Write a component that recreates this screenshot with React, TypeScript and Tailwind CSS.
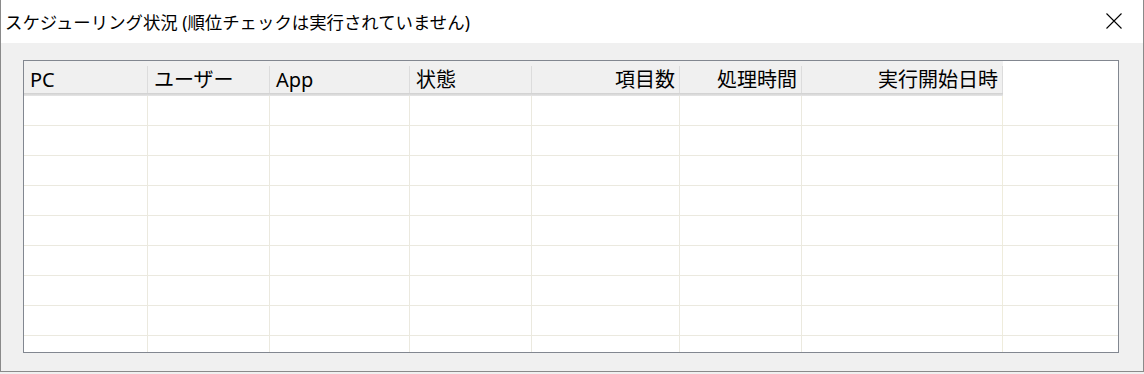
const COLS = [
  { label: 'PC', w: 'w-[124px]', align: 'left' },
  { label: 'ユーザー', w: 'w-[122px]', align: 'left' },
  { label: 'App', w: 'w-[140px]', align: 'left' },
  { label: '状態', w: 'w-[122px]', align: 'left' },
  { label: '項目数', w: 'w-[148px]', align: 'right' },
  { label: '処理時間', w: 'w-[122px]', align: 'right' },
  { label: '実行開始日時', w: 'w-[201px]', align: 'right' },
];

const ROWS = ['h-[30px]', 'h-[30px]', 'h-[30px]', 'h-[30px]', 'h-[30px]', 'h-[30px]', 'h-[30px]', 'h-[30px]', 'h-[16px]'];

const App = () => {
  return (
    <div className="w-[1144px] h-[374px] bg-[#f0f0f0] font-['Noto_Sans','Noto_Sans_CJK_JP',sans-serif] text-black overflow-hidden">
      <div className="h-[372px] border-x border-b border-[#8a8a8a] flex flex-col">
        {/* title bar */}
        <div className="h-[43px] bg-white flex items-center justify-between pl-[4px] pr-[21px] shrink-0">
          <span className="text-[17.4px] leading-none pt-[3px]">スケジューリング状況 (順位チェックは実行されていません)</span>
          <svg width="16" height="16" viewBox="0 0 16 16" className="mb-[1px]">
            <path d="M0.5 0.5 L15.5 15.5 M15.5 0.5 L0.5 15.5" stroke="#000" strokeWidth="1.1" fill="none" />
          </svg>
        </div>

        {/* list view */}
        <div className="pt-[17px] pl-[22px] pr-[24px]">
          <div className="h-[293px] border border-[#828790] bg-white flex flex-col">
            <div className="flex shrink-0">
              {COLS.map((c) => (
                <div key={c.label} className={`${c.w} h-[32px] bg-[#f0f0f0] flex items-end`}>
                  <div
                    className={`flex-1 h-full flex items-center text-[20px] leading-none pt-[6px] ${
                      c.align === 'right' ? 'justify-end pr-[4px]' : 'pl-[6px]'
                    }`}
                  >
                    {c.label}
                  </div>
                  <div className="w-px h-[27px] bg-[#dcdcdc]" />
                </div>
              ))}
            </div>
            <div className="flex shrink-0">
              <div className="w-[979px] h-[3px] bg-gradient-to-b from-[#cfcfcf] to-[#e6e6e6]" />
            </div>
            {ROWS.map((h, i) => (
              <div key={i} className={`flex ${h} ${i < ROWS.length - 1 ? 'border-b border-[#ebe9df]' : ''}`}>
                {COLS.map((c, j) => (
                  <div
                    key={c.label}
                    className={`${c.w} h-full border-r ${j === COLS.length - 1 ? 'border-[#efecdc]' : 'border-[#ebe9df]'}`}
                  />
                ))}
                <div className="flex-1" />
              </div>
            ))}
          </div>
        </div>
      </div>
    </div>
  );
};

export default App;
